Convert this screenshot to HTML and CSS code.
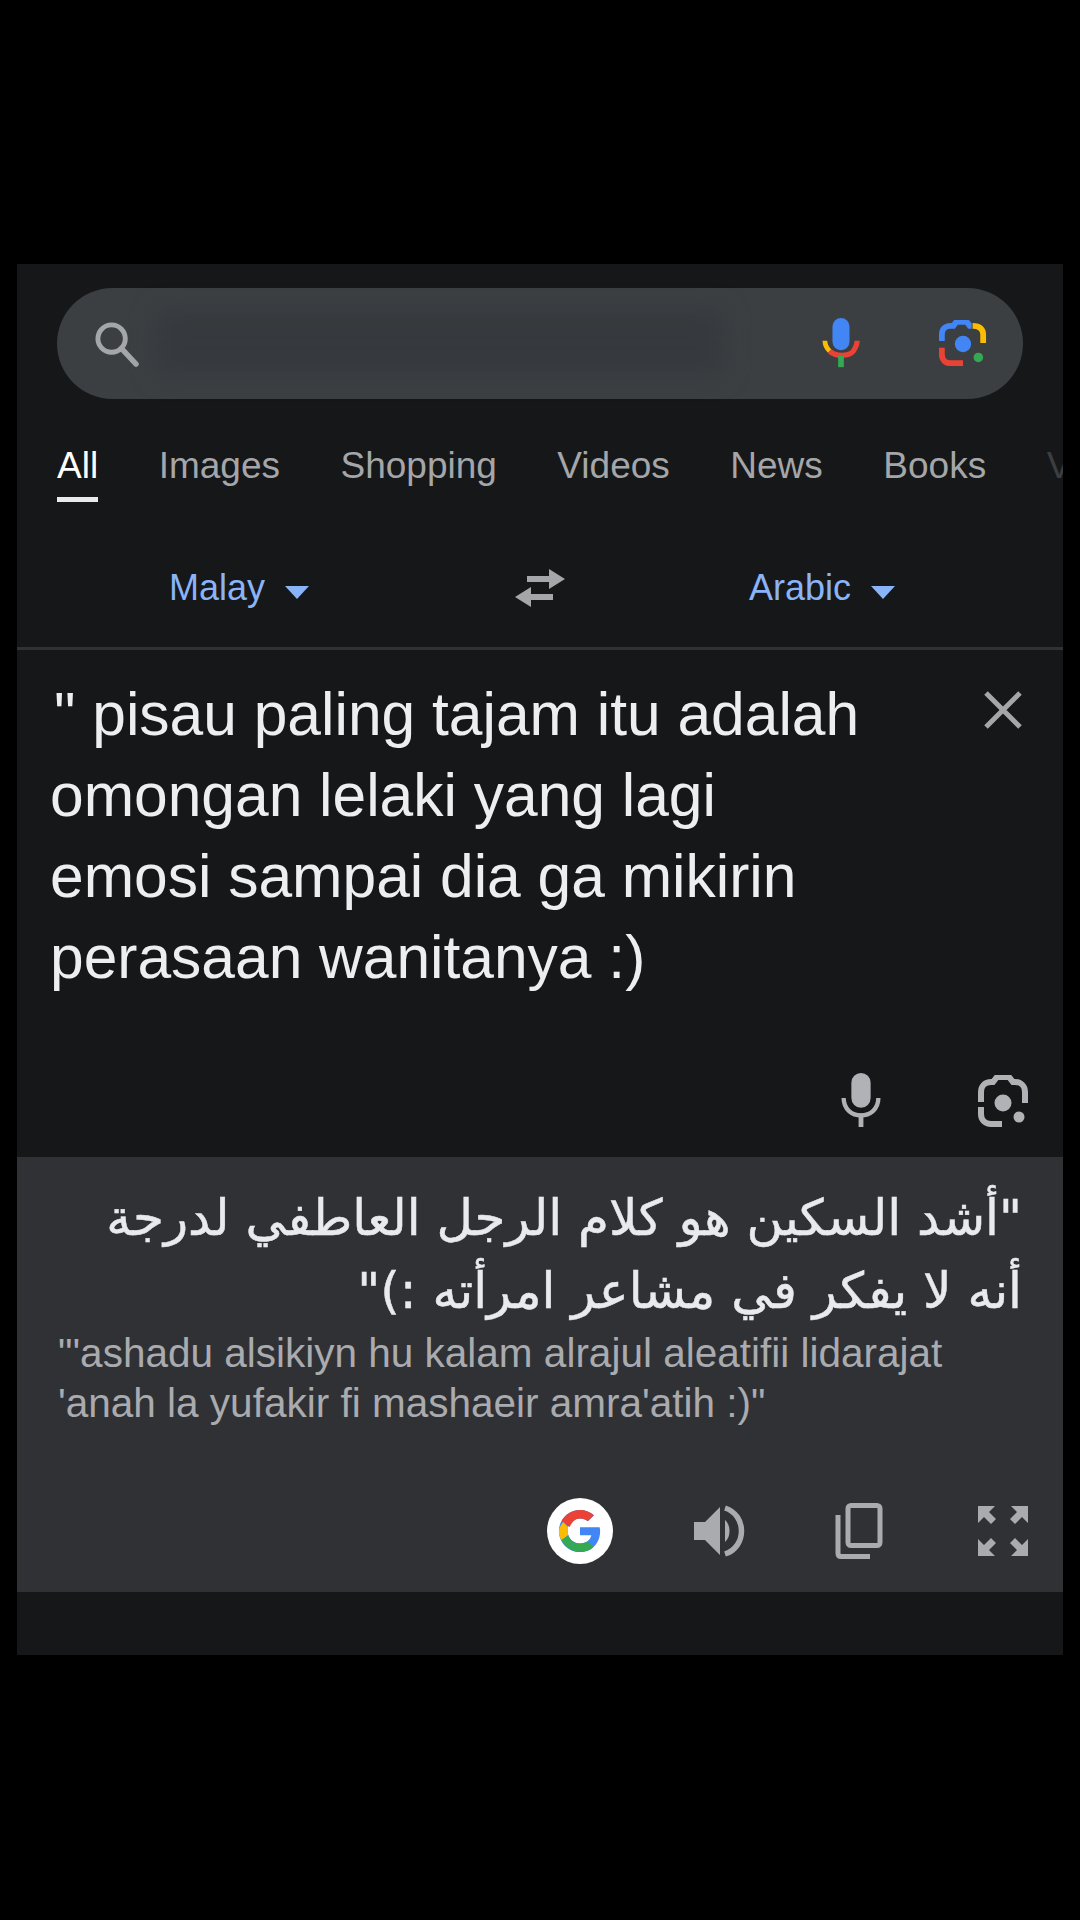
FILE: index.html
```html
<!DOCTYPE html>
<html lang="en">
<head>
<meta charset="UTF-8">
<meta name="viewport" content="width=device-width, initial-scale=1.0">
<title>Google Translate</title>
<link rel="stylesheet" href="styles.css">
</head>
<body>

<div class="panel">
    <div class="search-bar">
        <svg class="search-icon" viewBox="0 0 48 48"><circle cx="19" cy="19" r="14" fill="none" stroke="#a4a6a9" stroke-width="5"/><path d="M29 29 L44 45" stroke="#a4a6a9" stroke-width="5.5" stroke-linecap="round"/></svg>
        <div class="search-blur"></div>
        <svg class="mic-color" viewBox="0 0 40 56">
            <rect x="11" y="1" width="18" height="34" rx="9" fill="#4285f4"/>
            <path d="M3 25 C3 29 5 33 8 36" fill="none" stroke="#fbbc05" stroke-width="5"/>
            <path d="M8 36 C14 42 28 42 33 36 C35 33 37 29 37 25" fill="none" stroke="#ea4335" stroke-width="5.5"/>
            <rect x="17" y="41" width="6" height="12" fill="#34a853"/>
        </svg>
        <svg class="lens-color" viewBox="0 0 50 50">
            <path d="M3 22 V15 C3 9 7 6 12 6 H15 L18 2 H29 L32 6 H34" fill="none" stroke="#4285f4" stroke-width="6"/>
            <path d="M35 6 C43 6 46 10 46 15 V24" fill="none" stroke="#fbbc05" stroke-width="6"/>
            <path d="M3 29 V36 C3 42 7 45 12 45 H25" fill="none" stroke="#ea4335" stroke-width="6"/>
            <circle cx="25" cy="25" r="8.5" fill="#4285f4"/>
            <circle cx="41" cy="39" r="5" fill="#34a853"/>
        </svg>
    </div>

    <div class="tabs">
        <div class="tab active">All</div>
        <div class="tab">Images</div>
        <div class="tab">Shopping</div>
        <div class="tab">Videos</div>
        <div class="tab">News</div>
        <div class="tab">Books</div>
        <div class="tab faded">V</div>
    </div>

    <div class="lang-row">
        <div class="lang lang-from">Malay <span class="caret"></span></div>
        <svg class="swap" viewBox="0 0 50 38">
            <path d="M34 0 L50 10 L34 20 V13 H12 V7 H34 Z" fill="#a4a6a9"/>
            <path d="M16 18 V25 H38 V31 H16 V38 L0 28 Z" fill="#a4a6a9"/>
        </svg>
        <div class="lang lang-to">Arabic <span class="caret"></span></div>
    </div>

    <div class="source">
        <div class="source-text">
            <div class="first-line">" pisau paling tajam itu adalah</div>
            <div>omongan lelaki yang lagi</div>
            <div>emosi sampai dia ga mikirin</div>
            <div>perasaan wanitanya :)</div>
        </div>
        <svg class="close" viewBox="0 0 40 40"><path d="M3 3 L37 37 M37 3 L3 37" stroke="#a4a6a9" stroke-width="5"/></svg>
        <div class="source-actions">
            <svg class="icon mic-grey" viewBox="0 0 40 56">
                <rect x="10" y="0" width="20" height="36" rx="10" fill="#b0b2b6"/>
                <path d="M2 26 C2 50 38 50 38 26" fill="none" stroke="#b0b2b6" stroke-width="4.5"/>
                <rect x="17.5" y="42" width="5" height="14" fill="#b0b2b6"/>
            </svg>
            <svg class="icon lens-grey" viewBox="0 0 50 52">
                <path d="M3 27 V17 C3 11 7 7 13 7 H15 L19 2 H31 L35 7 H37 C43 7 47 11 47 17 V28" fill="none" stroke="#b0b2b6" stroke-width="6"/>
                <path d="M3 32 V39 C3 45 7 49 13 49 H24" fill="none" stroke="#b0b2b6" stroke-width="6"/>
                <circle cx="25" cy="28" r="8.5" fill="#b0b2b6"/>
                <circle cx="41" cy="42" r="5.5" fill="#b0b2b6"/>
            </svg>
        </div>
    </div>

    <div class="result">
        <div class="arabic" dir="rtl" lang="ar">"أشد السكين هو كلام الرجل العاطفي لدرجة<br>أنه لا يفكر في مشاعر امرأته :)"</div>
        <div class="translit">
            <div>"'ashadu alsikiyn hu kalam alrajul aleatifii lidarajat</div>
            <div>'anah la yufakir fi mashaeir amra'atih :)"</div>
        </div>
        <div class="result-actions">
            <div class="g-badge">
                <svg viewBox="0 0 48 48">
                    <path d="M44.5 20H24v8.500h11.800C34.700 33.900 30.100 37 24 37c-7.200 0-13-5.800-13-13s5.800-13 13-13c3.100 0 5.900 1.100 8.100 2.900l6.400-6.400C34.600 4.100 29.600 2 24 2 11.800 2 2 11.800 2 24s9.800 22 22 22c11 0 21-8 21-22 0-1.300-.2-2.700-.5-4z" fill="#4285f4"/>
                    <path d="M6.300 14.700l7 5.100C15.100 15.300 19.200 11 24 11c3.100 0 5.900 1.100 8.100 2.900l6.400-6.400C34.600 4.100 29.600 2 24 2 15.600 2 8.300 6.700 4.600 13.700z" fill="#ea4335"/>
                    <path d="M24 46c5.500 0 10.500-2 14.300-5.400l-6.600-5.600C29.600 36.200 26.900 37 24 37c-5.700 0-10.600-3.700-12.300-8.900l-7 5.400C8.200 40.800 15.500 46 24 46z" fill="#34a853"/>
                    <path d="M6.300 14.700C4.200 17.800 2 20.800 2 24s.8 6.700 2.700 9.500l7-5.400c-.9-2.500-.9-5.700 0-8.200z" fill="#fbbc05"/>
                </svg>
            </div>
            <svg class="icon speaker" viewBox="0 0 52 52">
                <path d="M1 17 H12 L27 2 V50 L12 35 H1 Z" fill="#a9abaf"/>
                <path d="M32 15 C38 20 38 32 32 37 Z" fill="#a9abaf"/>
                <path d="M32 3 C54 10 54 42 32 49" fill="none" stroke="#a9abaf" stroke-width="5.500"/>
            </svg>
            <svg class="icon copy" viewBox="0 0 48 56">
                <rect x="13" y="2.500" width="32" height="40" rx="3" fill="none" stroke="#a9abaf" stroke-width="5"/>
                <path d="M3 12 V50 C3 52 4 53.500 6 53.500 H35" fill="none" stroke="#a9abaf" stroke-width="5"/>
            </svg>
            <svg class="icon expand" viewBox="0 0 50 50">
                <path d="M0 0 H17 L11 6 L18 13 L13 18 L6 11 L0 17 Z" fill="#a9abaf"/>
                <path d="M50 0 H33 L39 6 L32 13 L37 18 L44 11 L50 17 Z" fill="#a9abaf"/>
                <path d="M0 50 H17 L11 44 L18 37 L13 32 L6 39 L0 33 Z" fill="#a9abaf"/>
                <path d="M50 50 H33 L39 44 L32 37 L37 32 L44 39 L50 33 Z" fill="#a9abaf"/>
            </svg>
        </div>
    </div>
</div>

</body>
</html>
```

FILE: styles.css
```css
/* Screenshot frame */
body {
    margin: 0;
    height: 1920px;
    background-color: #000;
    font-family: "Liberation Sans", Arial, sans-serif;
    overflow: hidden;
}

.panel {
    margin: 264px 17px 0;
    height: 1391px;
    background-color: #161718;
    overflow: hidden;
    display: flex;
    flex-direction: column;
}

/* Search bar */
.search-bar {
    position: relative;
    margin: 24px 40px 0;
    height: 111px;
    border-radius: 56px;
    background-color: #3c3f42;
    display: flex;
    align-items: center;
    padding: 0 36px 0 36px;
    flex-shrink: 0;
}

.search-icon {
    width: 47px;
    height: 47px;
}

.search-blur {
    position: absolute;
    left: 100px;
    right: 300px;
    top: 24px;
    bottom: 26px;
    background-color: #36393d;
    filter: blur(12px);
}

.mic-color {
    width: 38px;
    height: 53px;
    margin-left: auto;
    margin-right: 79px;
}

.lens-color {
    width: 48px;
    height: 48px;
}

/* Tabs */
.tabs {
    display: flex;
    gap: 60.5px;
    padding: 46px 0 0 40px;
    height: 72px;
    flex-shrink: 0;
    white-space: nowrap;
    font-size: 37px;
    color: #a4a6a9;
}

.tab {
    height: 60px;
    line-height: 42px;
}

.tab.active {
    color: #fff;
    height: 52px;
    border-bottom: 5px solid #e8eaed;
}

.tab.faded {
    color: #3c3e41;
    width: 20px;
    overflow: hidden;
}

/* Language row */
.lang-row {
    height: 133px;
    flex-shrink: 0;
    border-bottom: 3px solid #303134;
    box-sizing: border-box;
    display: grid;
    grid-template-columns: 1fr auto 1fr;
    align-items: center;
    padding: 12px 168px 0 152px;
    font-size: 36px;
    color: #8ab4f8;
}

.lang {
    display: flex;
    align-items: center;
    gap: 20px;
}

.lang-to {
    justify-content: flex-end;
}

.caret {
    width: 0;
    height: 0;
    border-left: 12px solid transparent;
    border-right: 12px solid transparent;
    border-top: 13px solid #8ab4f8;
    margin-top: 8px;
}

.swap {
    width: 50px;
    height: 38px;
    margin-left: 8px;
    margin-right: -8px;
}

/* Source text */
.source {
    position: relative;
    height: 507px;
    flex-shrink: 0;
    padding: 24px 0 0 33px;
    box-sizing: border-box;
}

.source-text {
    font-size: 60.5px;
    line-height: 81px;
    color: #eceef0;
    white-space: nowrap;
}

.first-line {
    padding-left: 4px;
}

.close {
    position: absolute;
    top: 40px;
    right: 40px;
    width: 40px;
    height: 40px;
}

.source-actions {
    position: absolute;
    right: 35px;
    bottom: 30px;
    display: flex;
    align-items: flex-end;
    gap: 97px;
}

.mic-grey {
    width: 40px;
    height: 54px;
}

.lens-grey {
    width: 50px;
    height: 52px;
}

/* Translation */
.result {
    position: relative;
    height: 435px;
    flex-shrink: 0;
    background-color: #303135;
    box-sizing: border-box;
    padding: 25px 41px 0 41px;
}

.arabic {
    font-family: "DejaVu Sans", sans-serif;
    font-size: 50px;
    line-height: 73px;
    color: #e8eaed;
    white-space: nowrap;
    -webkit-text-stroke: 0.5px #e8eaed;
}

.translit {
    font-size: 40.5px;
    line-height: 50px;
    color: #a9abaf;
    white-space: nowrap;
}

.result-actions {
    position: absolute;
    right: 35px;
    bottom: 28px;
    display: flex;
    align-items: center;
}

.g-badge {
    width: 66px;
    height: 66px;
    border-radius: 50%;
    background-color: #fff;
    display: flex;
    align-items: center;
    justify-content: center;
    margin-right: 80px;
}

.g-badge svg {
    width: 46px;
    height: 46px;
}

.speaker {
    width: 52px;
    height: 52px;
    margin-right: 90px;
}

.copy {
    width: 48px;
    height: 56px;
    margin-right: 95px;
}

.expand {
    width: 50px;
    height: 50px;
}
```
